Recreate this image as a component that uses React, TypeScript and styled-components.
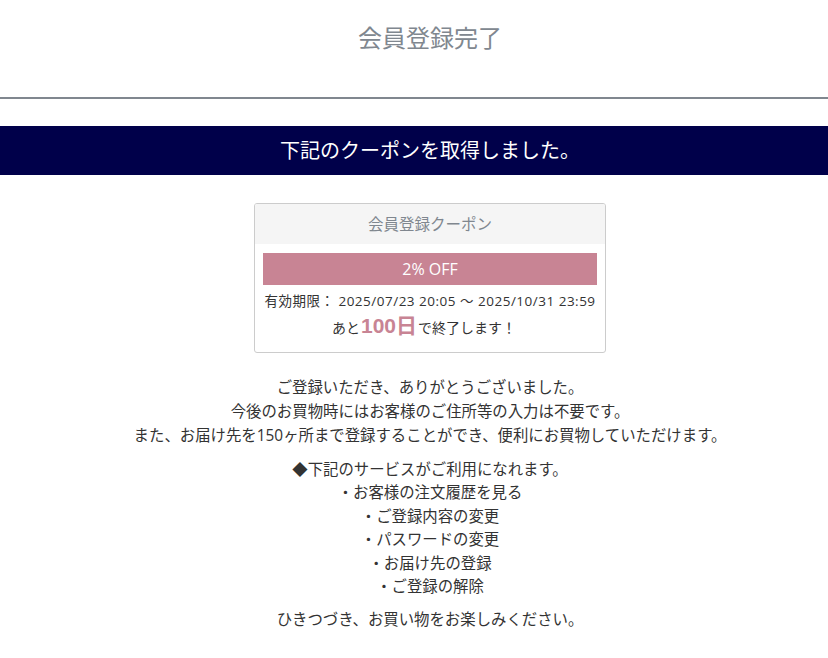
import React from 'react';
import styled, { createGlobalStyle } from 'styled-components';

const GlobalStyle = createGlobalStyle`
  html, body {
    margin: 0;
    padding: 0;
    background: #fff;
  }
  body {
    font-family: 'Open Sans', 'Noto Sans CJK JP', sans-serif;
    color: #333;
  }
`;

const services = [
  '・お客様の注文履歴を見る',
  '・ご登録内容の変更',
  '・パスワードの変更',
  '・お届け先の登録',
  '・ご登録の解除',
];

const App = () => {
  return (
    <>
      <GlobalStyle />
      <Page>
        <PageHeader>
          <PageTitle>会員登録完了</PageTitle>
        </PageHeader>
        <Band>下記のクーポンを取得しました。</Band>
        <Content>
          <CouponCard>
            <CouponHead>会員登録クーポン</CouponHead>
            <CouponBody>
              <Discount>2% OFF</Discount>
              <Period>有効期限： 2025/07/23 20:05 ～ 2025/10/31 23:59</Period>
              <Remain>
                あと<RemainDays>100日</RemainDays>で終了します！
              </Remain>
            </CouponBody>
          </CouponCard>
          <Message>
            <Line>ご登録いただき、ありがとうございました。</Line>
            <Line>今後のお買物時にはお客様のご住所等の入力は不要です。</Line>
            <Line>
              また、お届け先を150ヶ所まで登録することができ、便利にお買物していただけます。
            </Line>
          </Message>
          <ServiceList>
            <ServiceItem>◆下記のサービスがご利用になれます。</ServiceItem>
            {services.map((s) => (
              <ServiceItem key={s}>{s}</ServiceItem>
            ))}
          </ServiceList>
          <Closing>ひきつづき、お買い物をお楽しみください。</Closing>
        </Content>
      </Page>
    </>
  );
};

const Page = styled.div`
  width: 828px;
  min-height: 658px;
  display: flex;
  flex-direction: column;
`;

const PageHeader = styled.div`
  height: 99px;
  border-bottom: 2px solid #80878f;
  display: flex;
  justify-content: center;
  padding-left: 32px;
  box-sizing: border-box;
`;

const PageTitle = styled.h1`
  margin: 21px 0 0;
  font-family: 'Noto Sans CJK JP', sans-serif;
  font-size: 24px;
  font-weight: 400;
  line-height: 32px;
  color: #80878f;
`;

const Band = styled.div`
  margin-top: 27px;
  height: 49px;
  background: #00004a;
  color: #fff;
  font-size: 20px;
  line-height: 49px;
  text-align: center;
  padding-left: 32px;
`;

const Content = styled.div`
  display: flex;
  flex-direction: column;
  align-items: center;
  padding-left: 32px;
  padding-top: 28px;
`;

const CouponCard = styled.div`
  width: 352px;
  box-sizing: border-box;
  border: 1px solid #ccc;
  border-radius: 3px;
  overflow: hidden;
`;

const CouponHead = styled.div`
  height: 40px;
  background: #f5f5f5;
  color: #80878f;
  font-size: 15.5px;
  line-height: 40px;
  text-align: center;
`;

const CouponBody = styled.div`
  padding: 9px 8px 9px;
  display: flex;
  flex-direction: column;
  align-items: center;
`;

const Discount = styled.div`
  align-self: stretch;
  height: 32px;
  background: #c88494;
  color: #fff;
  font-size: 16px;
  line-height: 32px;
  text-align: center;
`;

const Period = styled.div`
  margin-top: 6px;
  font-size: 13.5px;
  letter-spacing: 0.5px;
  line-height: 20px;
  color: #333;
  white-space: nowrap;
`;

const Remain = styled.div`
  font-size: 14px;
  line-height: 30px;
  color: #333;
  padding-right: 12px;
`;

const RemainDays = styled.span`
  font-family: 'Liberation Sans', Arial, 'Noto Sans CJK JP', sans-serif;
  font-size: 21px;
  font-weight: 700;
  color: #c88494;
  margin: 0 1px;
`;

const Message = styled.div`
  margin-top: 23px;
  text-align: center;
  font-size: 15.4px;
  line-height: 24px;
  color: #333;
`;

const Line = styled.p`
  margin: 0;
`;

const ServiceList = styled.ul`
  list-style: none;
  margin: 10px 0 0;
  padding: 0;
  text-align: center;
  font-size: 15.4px;
  line-height: 23.4px;
  color: #333;
`;

const ServiceItem = styled.li``;

const Closing = styled.p`
  margin: 10px 0 0;
  text-align: center;
  font-size: 15.4px;
  line-height: 24px;
  color: #333;
`;

export default App;
